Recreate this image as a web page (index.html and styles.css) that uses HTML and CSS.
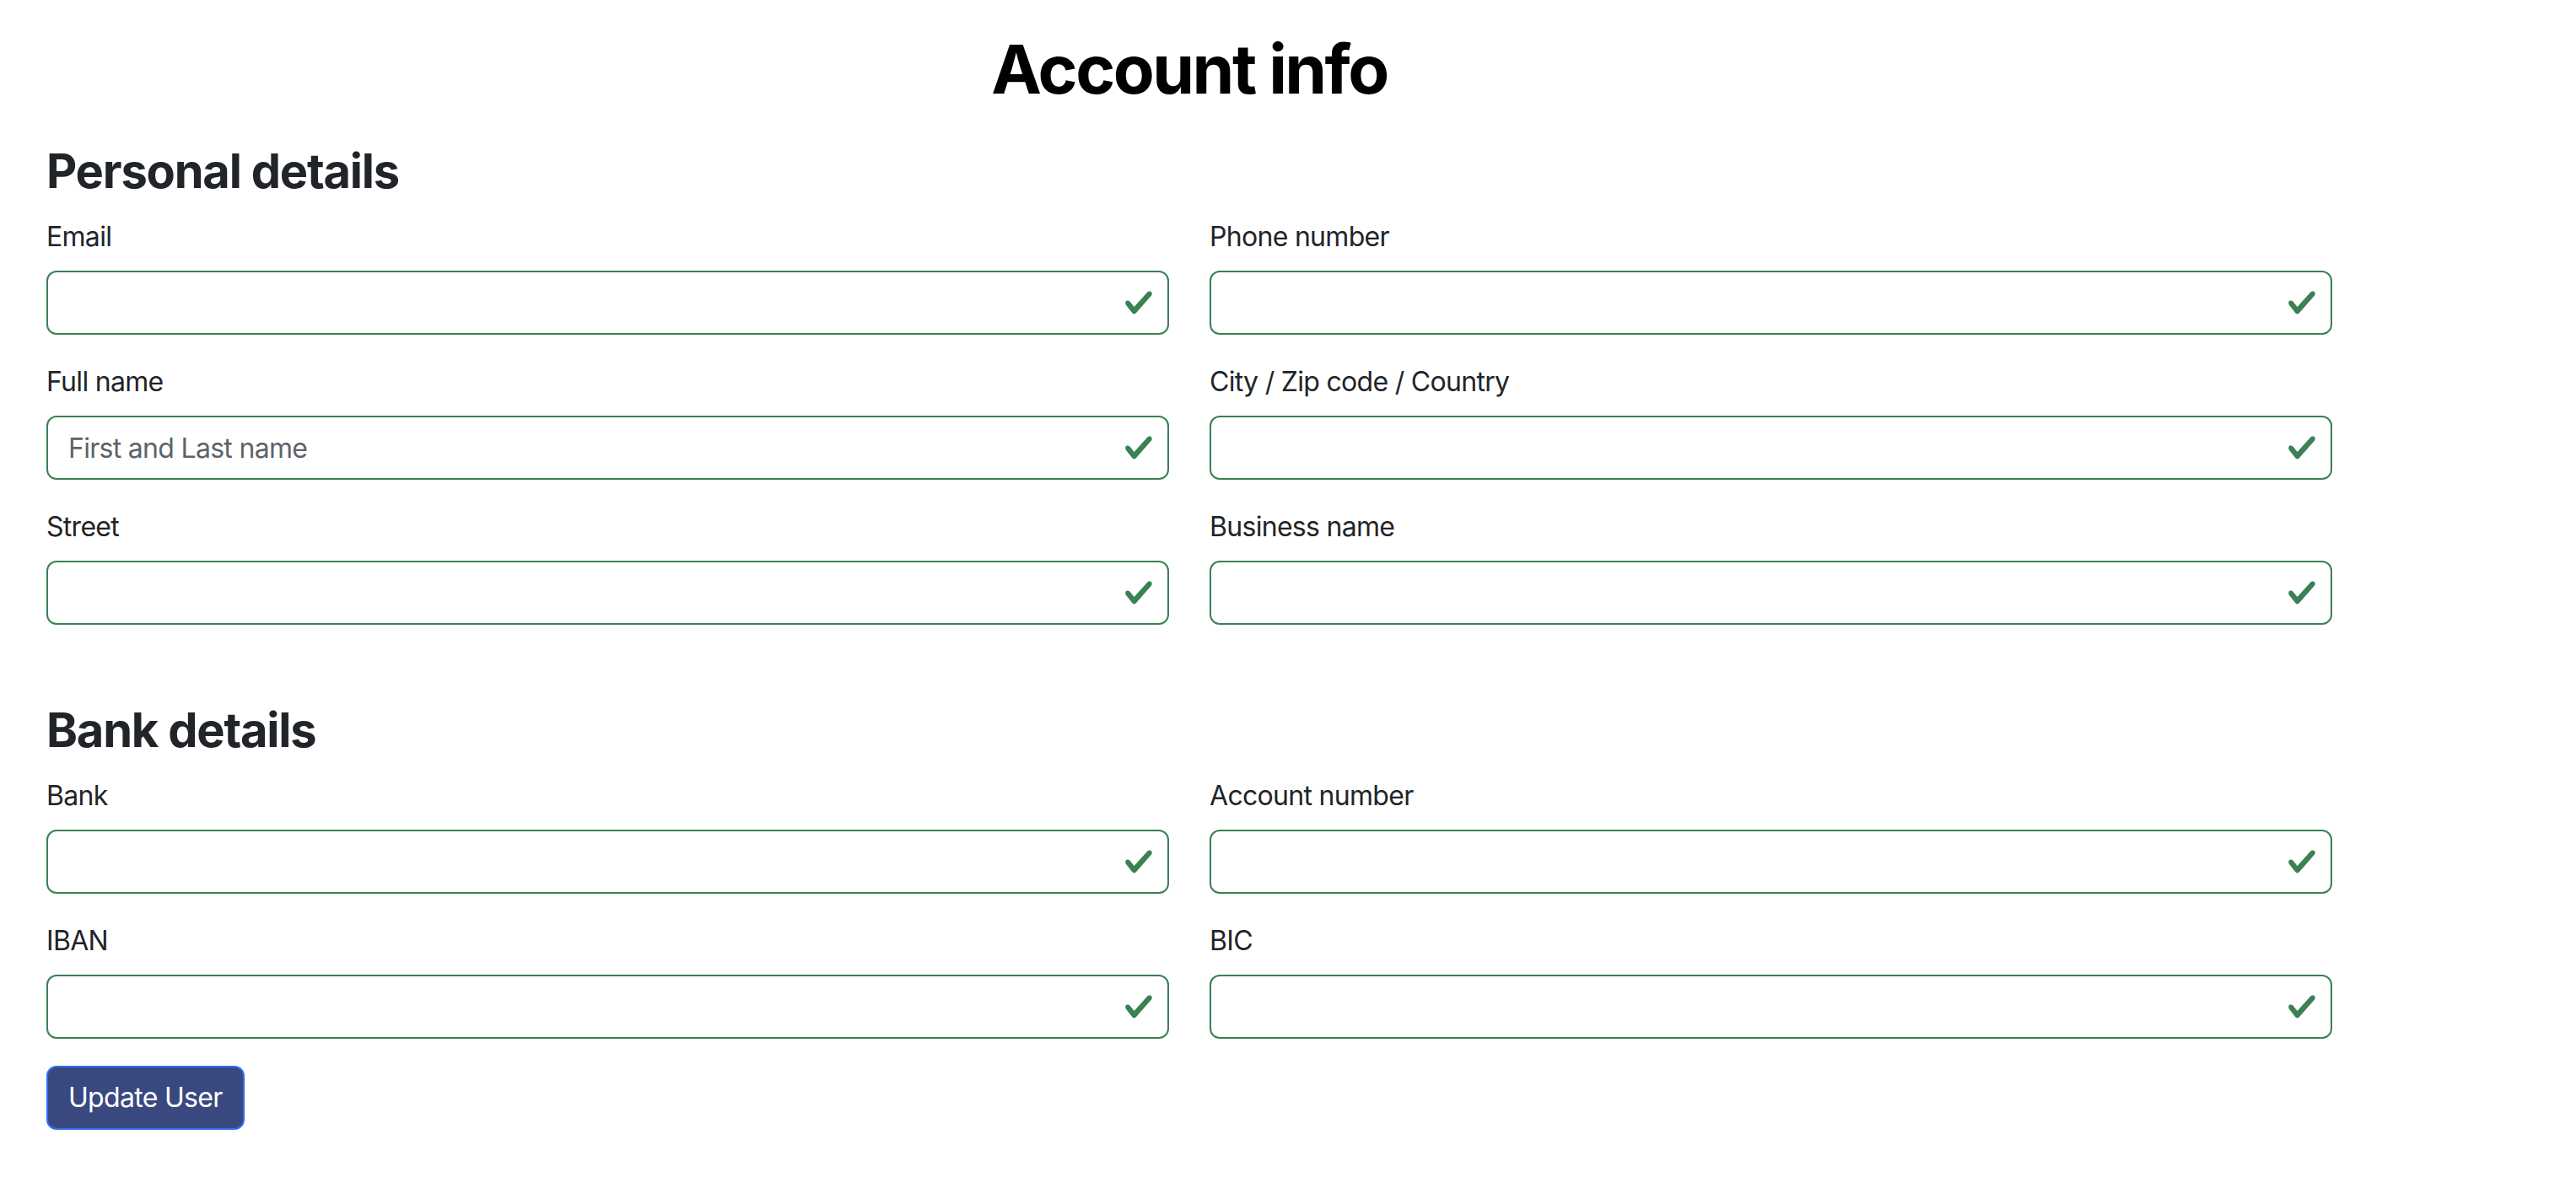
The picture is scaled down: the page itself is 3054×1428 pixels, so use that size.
FILE: index.html
```html
<!DOCTYPE html>
<html lang="en">
<head>
<meta charset="utf-8">
<title>Account info</title>
<link rel="stylesheet" href="styles.css">
</head>
<body>
<main class="account">
  <h1 class="title">Account info</h1>

  <section class="section">
    <h3 class="section-title">Personal details</h3>
    <div class="grid">
      <div class="field">
        <label class="label" for="email">Email</label>
        <div class="control">
          <input class="input" id="email" type="email">
          <svg class="valid-icon" viewBox="0 0 8 8"><path d="M2.3 6.73.6 4.53c-.4-1.04.46-1.4 1.1-.8l1.1 1.4 3.4-3.8c.6-.63 1.6-.27 1.2.7l-4 4.6c-.43.5-.8.4-1.1.1z"/></svg>
        </div>
      </div>
      <div class="field">
        <label class="label" for="phone">Phone number</label>
        <div class="control">
          <input class="input" id="phone" type="text">
          <svg class="valid-icon" viewBox="0 0 8 8"><path d="M2.3 6.73.6 4.53c-.4-1.04.46-1.4 1.1-.8l1.1 1.4 3.4-3.8c.6-.63 1.6-.27 1.2.7l-4 4.6c-.43.5-.8.4-1.1.1z"/></svg>
        </div>
      </div>
      <div class="field">
        <label class="label" for="fullname">Full name</label>
        <div class="control">
          <input class="input" id="fullname" type="text" placeholder="First and Last name">
          <svg class="valid-icon" viewBox="0 0 8 8"><path d="M2.3 6.73.6 4.53c-.4-1.04.46-1.4 1.1-.8l1.1 1.4 3.4-3.8c.6-.63 1.6-.27 1.2.7l-4 4.6c-.43.5-.8.4-1.1.1z"/></svg>
        </div>
      </div>
      <div class="field">
        <label class="label" for="city">City / Zip code / Country</label>
        <div class="control">
          <input class="input" id="city" type="text">
          <svg class="valid-icon" viewBox="0 0 8 8"><path d="M2.3 6.73.6 4.53c-.4-1.04.46-1.4 1.1-.8l1.1 1.4 3.4-3.8c.6-.63 1.6-.27 1.2.7l-4 4.6c-.43.5-.8.4-1.1.1z"/></svg>
        </div>
      </div>
      <div class="field">
        <label class="label" for="street">Street</label>
        <div class="control">
          <input class="input" id="street" type="text">
          <svg class="valid-icon" viewBox="0 0 8 8"><path d="M2.3 6.73.6 4.53c-.4-1.04.46-1.4 1.1-.8l1.1 1.4 3.4-3.8c.6-.63 1.6-.27 1.2.7l-4 4.6c-.43.5-.8.4-1.1.1z"/></svg>
        </div>
      </div>
      <div class="field">
        <label class="label" for="business">Business name</label>
        <div class="control">
          <input class="input" id="business" type="text">
          <svg class="valid-icon" viewBox="0 0 8 8"><path d="M2.3 6.73.6 4.53c-.4-1.04.46-1.4 1.1-.8l1.1 1.4 3.4-3.8c.6-.63 1.6-.27 1.2.7l-4 4.6c-.43.5-.8.4-1.1.1z"/></svg>
        </div>
      </div>
    </div>
  </section>

  <section class="section section-bank">
    <h3 class="section-title">Bank details</h3>
    <div class="grid">
      <div class="field">
        <label class="label" for="bank">Bank</label>
        <div class="control">
          <input class="input" id="bank" type="text">
          <svg class="valid-icon" viewBox="0 0 8 8"><path d="M2.3 6.73.6 4.53c-.4-1.04.46-1.4 1.1-.8l1.1 1.4 3.4-3.8c.6-.63 1.6-.27 1.2.7l-4 4.6c-.43.5-.8.4-1.1.1z"/></svg>
        </div>
      </div>
      <div class="field">
        <label class="label" for="account">Account number</label>
        <div class="control">
          <input class="input" id="account" type="text">
          <svg class="valid-icon" viewBox="0 0 8 8"><path d="M2.3 6.73.6 4.53c-.4-1.04.46-1.4 1.1-.8l1.1 1.4 3.4-3.8c.6-.63 1.6-.27 1.2.7l-4 4.6c-.43.5-.8.4-1.1.1z"/></svg>
        </div>
      </div>
      <div class="field">
        <label class="label" for="iban">IBAN</label>
        <div class="control">
          <input class="input" id="iban" type="text">
          <svg class="valid-icon" viewBox="0 0 8 8"><path d="M2.3 6.73.6 4.53c-.4-1.04.46-1.4 1.1-.8l1.1 1.4 3.4-3.8c.6-.63 1.6-.27 1.2.7l-4 4.6c-.43.5-.8.4-1.1.1z"/></svg>
        </div>
      </div>
      <div class="field">
        <label class="label" for="bic">BIC</label>
        <div class="control">
          <input class="input" id="bic" type="text">
          <svg class="valid-icon" viewBox="0 0 8 8"><path d="M2.3 6.73.6 4.53c-.4-1.04.46-1.4 1.1-.8l1.1 1.4 3.4-3.8c.6-.63 1.6-.27 1.2.7l-4 4.6c-.43.5-.8.4-1.1.1z"/></svg>
        </div>
      </div>
    </div>
  </section>

  <button class="btn" type="submit">Update User</button>
</main>
</body>
</html>
```
FILE: styles.css
```css
* { box-sizing: border-box; }

html, body {
  margin: 0;
  padding: 0;
  background: #fff;
}

body {
  font-family: Inter, "Noto Sans", "Liberation Sans", sans-serif;
  font-size: 32px;
  line-height: 1.5;
  color: #212529;
  letter-spacing: -0.7px;
}

.account {
  width: 2710px;
  margin-left: 55px;
}

.title {
  margin: 34px 0 40px;
  font-size: 80px;
  font-weight: 700;
  line-height: 1.2;
  color: #000;
  text-align: center;
  letter-spacing: -2.5px;
}

.section-title {
  margin: 0 0 20px;
  font-size: 56px;
  font-weight: 700;
  line-height: 1.2;
  color: #212529;
  letter-spacing: -1.2px;
}

.section-bank {
  margin-top: 60px;
}

.grid {
  display: grid;
  grid-template-columns: 1fr 1fr;
  column-gap: 48px;
}

.field {
  margin-bottom: 32px;
}

.label {
  display: block;
  margin-bottom: 16px;
  line-height: 48px;
}

.control {
  position: relative;
}

.input {
  display: block;
  width: 100%;
  height: 76px;
  padding: 12px 84px 12px 24px;
  font-family: inherit;
  font-size: 32px;
  line-height: 48px;
  letter-spacing: -0.7px;
  color: #212529;
  background: #fff;
  border: 2px solid #3a8154;
  border-radius: 12px;
  outline: none;
}

.input::placeholder {
  color: #5c636a;
  opacity: 1;
}

.valid-icon {
  position: absolute;
  right: 18px;
  top: 20px;
  width: 36px;
  height: 36px;
  fill: #3a8154;
}

.btn {
  display: inline-block;
  padding: 12px 24px;
  font-family: inherit;
  font-size: 32px;
  line-height: 48px;
  letter-spacing: -0.7px;
  color: #fff;
  background: #3a4880;
  border: 2px solid #2f6ef0;
  border-radius: 12px;
  cursor: pointer;
}
```
